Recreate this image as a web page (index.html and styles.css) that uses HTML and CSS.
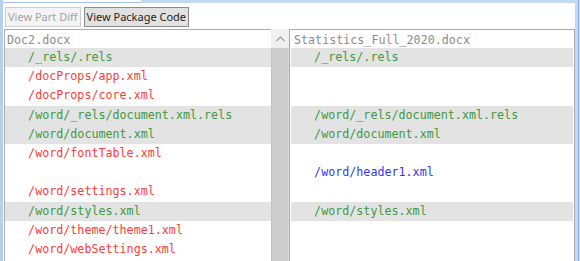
FILE: index.html
```html
<!DOCTYPE html>
<html lang="en">
<head>
  <meta charset="UTF-8">
  <title>Package Compare</title>
  <link rel="stylesheet" href="styles.css">
</head>
<body>

  <div class="window">
    <div class="frame">
      <div class="tabstrip"><div class="tab"></div></div>

      <div class="toolbar">
        <button class="btn" disabled>View Part Diff</button>
        <button class="btn active">View Package Code</button>
      </div>

      <div class="panes">
        <div class="pane pane-left">
          <div class="list">
            <div class="head">Doc2.docx</div>
            <div class="row same">   /_rels/.rels</div>
            <div class="row del">   /docProps/app.xml</div>
            <div class="row del">   /docProps/core.xml</div>
            <div class="row same">   /word/_rels/document.xml.rels</div>
            <div class="row same">   /word/document.xml</div>
            <div class="row del">   /word/fontTable.xml</div>
            <div class="row"></div>
            <div class="row del">   /word/settings.xml</div>
            <div class="row same">   /word/styles.xml</div>
            <div class="row del">   /word/theme/theme1.xml</div>
            <div class="row del">   /word/webSettings.xml</div>
          </div>
          <div class="vscroll">
            <div class="up">
              <svg width="9" height="6" viewBox="0 0 9 6"><path d="M0.5 5 L4.5 1 L8.5 5" fill="none" stroke="#9c9c9c" stroke-width="1.2"/></svg>
            </div>
            <div class="thumb"></div>
          </div>
        </div>

        <div class="pane pane-right">
          <div class="list">
            <div class="head">Statistics_Full_2020.docx</div>
            <div class="row same">   /_rels/.rels</div>
            <div class="row"></div>
            <div class="row"></div>
            <div class="row same">   /word/_rels/document.xml.rels</div>
            <div class="row same">   /word/document.xml</div>
            <div class="row"></div>
            <div class="row add">   /word/header1.xml</div>
            <div class="row"></div>
            <div class="row same">   /word/styles.xml</div>
            <div class="row"></div>
            <div class="row"></div>
          </div>
        </div>
      </div>
    </div>
  </div>

</body>
</html>
```

FILE: styles.css
```css
body {
  margin: 0;
  width: 580px;
  height: 261px;
  overflow: hidden;
  background-color: #fff;
}
.window {
  height: 261px;
  padding-right: 1px;
  border-right: 1px solid #c6daf2;
  background-color: #93b4e0;
}
.frame {
  height: 100%;
  display: flex;
  flex-direction: column;
  background-color: #fff;
  border-left: 3px solid #b7cfee;
  border-right: 3px solid #c3d8f2;
  overflow: hidden;
}
.tabstrip {
  height: 3px;
  flex-shrink: 0;
  background-color: #c3d8f2;
}
.tab {
  width: 138px;
  height: 2px;
  background-color: #fff;
  border-bottom: 1px solid #a5c3ea;
}
.toolbar {
  height: 26px;
  flex-shrink: 0;
  box-sizing: border-box;
  padding: 4px 0 0 2px;
  display: flex;
  gap: 3px;
  align-items: flex-start;
}
.btn {
  height: 20px;
  margin: 0;
  padding: 0 2px;
  font-family: "Noto Sans", sans-serif;
  font-size: 11px;
  line-height: 18px;
  color: #1e1e1e;
  background-color: #e1e1e1;
  border: 1px solid #8a8a8a;
  border-radius: 0;
}
.btn:disabled {
  color: #a3a3a3;
  background-color: #f4f4f4;
  border-color: #cdcdcd;
}
.panes {
  flex: 1;
  display: flex;
  margin-left: 1px;
  min-height: 0;
}
.pane {
  height: 250px;
  display: flex;
  box-sizing: border-box;
  border: 1px solid #ababab;
}
.pane-left {
  width: 285px;
  border-right: none;
}
.pane-right {
  width: 286px;
  padding: 0 1px;
}
.list {
  flex: 1;
  font-family: "DejaVu Sans Mono", monospace;
  font-size: 11.7px;
}
.head {
  height: 18px;
  line-height: 20px;
  padding-left: 2px;
  color: #8c8c8c;
}
.pane-right .head {
  padding-left: 3px;
}
.row {
  height: 19.2px;
  line-height: 19.6px;
  padding-left: 2px;
  white-space: pre;
}
.same {
  color: #3f983f;
  background-color: #e3e3e3;
}
.del {
  color: #ff3a3a;
}
.add {
  color: #3434ff;
}
.vscroll {
  width: 18px;
  display: flex;
  flex-direction: column;
  margin-top: -1px;
}
.up {
  height: 19px;
  display: flex;
  align-items: center;
  justify-content: center;
  background-color: #f0f0f0;
}
.thumb {
  flex: 1;
  background-color: #cdcdcd;
  border-left: 1px solid #c2c2c2;
  border-right: 1px solid #dadada;
}
```
